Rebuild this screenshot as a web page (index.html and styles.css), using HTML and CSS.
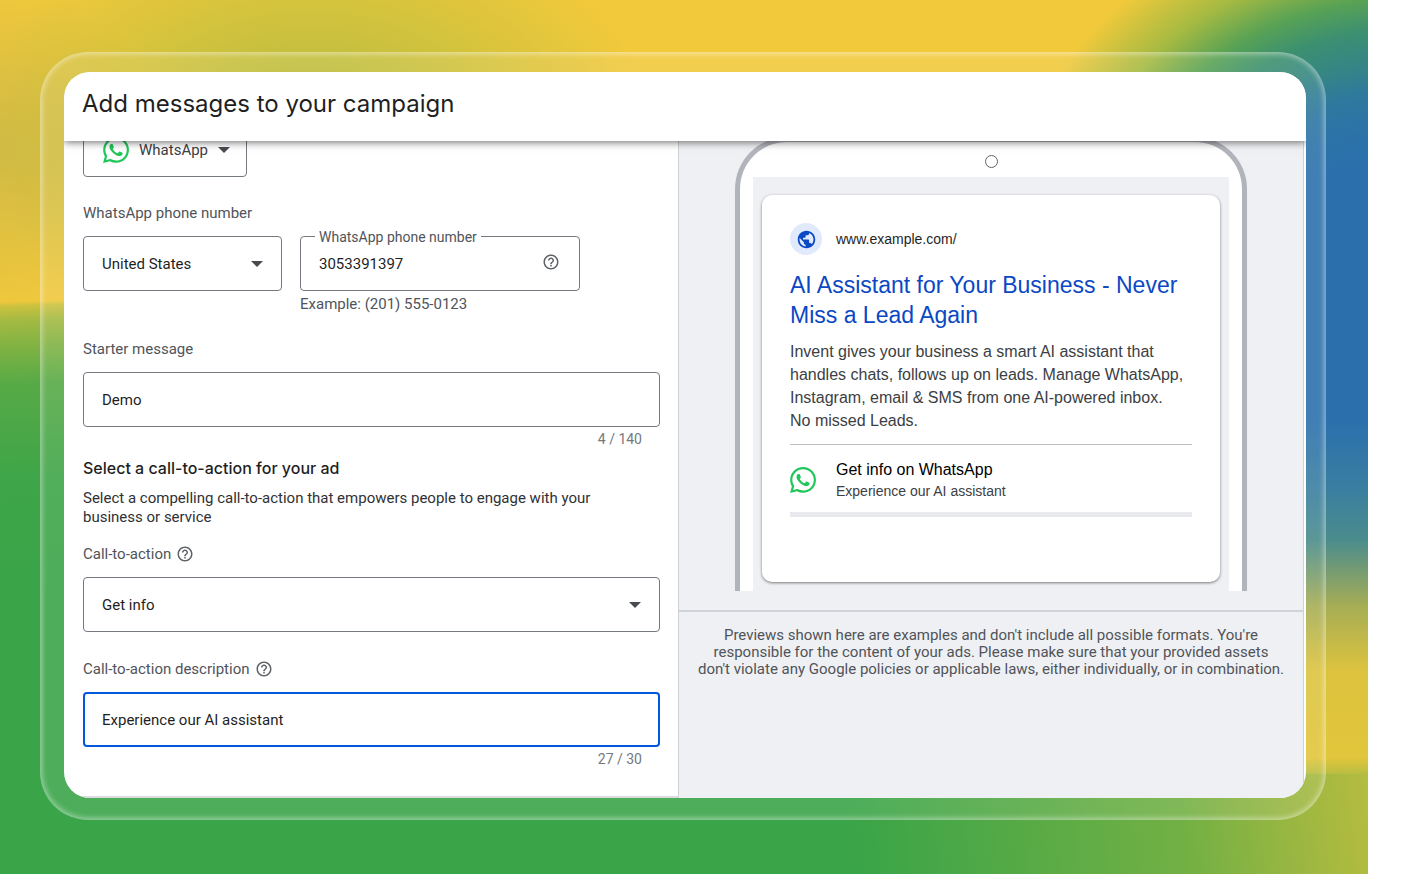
FILE: index.html
```
<!DOCTYPE html>
<html lang="en">
<head>
    <meta charset="UTF-8">
    <meta name="viewport" content="width=device-width, initial-scale=1.0">
    <title>Add messages to your campaign</title>
    <link rel="stylesheet" href="styles.css">
</head>
<body>
    <svg class="sprite" aria-hidden="true">
        <symbol id="icon-whatsapp" viewBox="0 0 24 24">
            <path fill="currentColor" d="M17.472 14.382c-.297-.149-1.758-.867-2.03-.967-.273-.099-.471-.148-.67.15-.197.297-.767.966-.94 1.164-.173.199-.347.223-.644.075-.297-.15-1.255-.463-2.39-1.475-.883-.788-1.48-1.761-1.653-2.059-.173-.297-.018-.458.13-.606.134-.133.298-.347.446-.52.149-.174.198-.298.298-.497.099-.198.05-.371-.025-.52-.075-.149-.669-1.612-.916-2.207-.242-.579-.487-.5-.669-.51-.173-.008-.371-.01-.57-.01-.198 0-.52.074-.792.372-.272.297-1.04 1.016-1.04 2.479 0 1.462 1.065 2.875 1.213 3.074.149.198 2.096 3.2 5.077 4.487.709.306 1.262.489 1.694.625.712.227 1.36.195 1.871.118.571-.085 1.758-.719 2.006-1.413.248-.694.248-1.289.173-1.413-.074-.124-.272-.198-.57-.347m-5.421 7.403h-.004a9.87 9.87 0 01-5.031-1.378l-.361-.214-3.741.982.998-3.648-.235-.374a9.86 9.86 0 01-1.51-5.26c.001-5.45 4.436-9.884 9.888-9.884 2.64 0 5.122 1.03 6.988 2.898a9.825 9.825 0 012.893 6.994c-.003 5.45-4.437 9.884-9.885 9.884m8.413-18.297A11.815 11.815 0 0012.05 0C5.495 0 .16 5.335.157 11.892c0 2.096.547 4.142 1.588 5.945L.057 24l6.305-1.654a11.882 11.882 0 005.683 1.448h.005c6.554 0 11.89-5.335 11.893-11.893a11.821 11.821 0 00-3.48-8.413z"/>
        </symbol>
        <symbol id="icon-help" viewBox="0 0 24 24">
            <path fill="currentColor" d="M11 18h2v-2h-2v2zm1-16C6.48 2 2 6.48 2 12s4.48 10 10 10 10-4.48 10-10S17.52 2 12 2zm0 18c-4.41 0-8-3.59-8-8s3.59-8 8-8 8 3.59 8 8-3.59 8-8 8zm0-14c-2.21 0-4 1.79-4 4h2c0-1.1.9-2 2-2s2 .9 2 2c0 2-3 1.75-3 5h2c0-2.25 3-2.5 3-5 0-2.21-1.79-4-4-4z"/>
        </symbol>
        <symbol id="icon-globe" viewBox="0 0 24 24">
            <path fill="currentColor" d="M12 2C6.48 2 2 6.48 2 12s4.48 10 10 10 10-4.48 10-10S17.52 2 12 2zm-1 17.93c-3.95-.49-7-3.85-7-7.93 0-.62.08-1.21.21-1.79L9 15v1c0 1.1.9 2 2 2v1.93zm6.9-2.54c-.26-.81-1-1.39-1.9-1.39h-1v-3c0-.55-.45-1-1-1H8v-2h2c.55 0 1-.45 1-1V7h2c1.1 0 2-.9 2-2v-.41c2.93 1.19 5 4.06 5 7.41 0 2.08-.8 3.97-2.1 5.39z"/>
        </symbol>
    </svg>

    <main class="backdrop">
        <div class="frame">
            <div class="window">
                <header class="window-header">
                    <h1>Add messages to your campaign</h1>
                </header>

                <div class="panes">
                    <form class="form-pane">
                        <button type="button" class="provider">
                            <svg class="whatsapp-icon"><use href="#icon-whatsapp"/></svg>
                            <span>WhatsApp</span>
                            <span class="caret"></span>
                        </button>

                        <label class="field-label" for="country">WhatsApp phone number</label>
                        <div class="phone-row">
                            <select id="country" class="control">
                                <option>United States</option>
                            </select>
                            <div class="phone-field">
                                <div class="outlined">
                                    <label class="float-label" for="phone">WhatsApp phone number</label>
                                    <input id="phone" class="control" type="tel" value="3053391397">
                                    <svg class="help-icon"><use href="#icon-help"/></svg>
                                </div>
                                <p class="hint">Example: (201) 555-0123</p>
                            </div>
                        </div>

                        <label class="field-label" for="starter">Starter message</label>
                        <input id="starter" class="control" type="text" value="Demo">
                        <p class="counter">4 / 140</p>

                        <h2>Select a call-to-action for your ad</h2>
                        <p class="description">Select a compelling call-to-action that empowers people to engage with your business or service</p>

                        <label class="field-label" for="cta">Call-to-action <svg class="help-icon"><use href="#icon-help"/></svg></label>
                        <select id="cta" class="control">
                            <option>Get info</option>
                        </select>

                        <label class="field-label" for="cta-description">Call-to-action description <svg class="help-icon"><use href="#icon-help"/></svg></label>
                        <input id="cta-description" class="control active" type="text" value="Experience our AI assistant">
                        <p class="counter">27 / 30</p>
                    </form>

                    <aside class="preview-pane">
                        <div class="preview-stage">
                            <div class="device">
                                <div class="camera"></div>
                                <div class="screen">
                                    <article class="ad">
                                        <div class="ad-site">
                                            <span class="site-icon"><svg><use href="#icon-globe"/></svg></span>
                                            <span>www.example.com/</span>
                                        </div>
                                        <h3>AI Assistant for Your Business - Never Miss a Lead Again</h3>
                                        <p class="ad-text">Invent gives your business a smart AI assistant that handles chats, follows up on leads. Manage WhatsApp, Instagram, email &amp; SMS from one AI-powered inbox. No missed Leads.</p>
                                        <div class="ad-action">
                                            <svg class="whatsapp-icon"><use href="#icon-whatsapp"/></svg>
                                            <div>
                                                <p class="action-title">Get info on WhatsApp</p>
                                                <p class="action-text">Experience our AI assistant</p>
                                            </div>
                                        </div>
                                    </article>
                                </div>
                            </div>
                        </div>
                        <p class="disclaimer">Previews shown here are examples and don't include all possible formats. You're responsible for the content of your ads. Please make sure that your provided assets don't violate any Google policies or applicable laws, either individually, or in combination.</p>
                    </aside>
                </div>
            </div>
        </div>
    </main>
</body>
</html>
```
FILE: styles.css
```
* {
    margin: 0;
    padding: 0;
    box-sizing: border-box;
}

body {
    font-family: Roboto, Arial, sans-serif;
    font-size: 15px;
    line-height: 20px;
    color: #1f1f1f;
    background-color: #ffffff;
}

.sprite {
    display: none;
}

/* Edge strips first, then the soft blobs, then the yellow base */
.backdrop {
    min-height: 100vh;
    margin-right: 40px;
    padding: 52px 42px 54px 40px;
    background:
        linear-gradient(83deg, #39a448 62%, #72b044 86%, #a8b940 97%, #b5bc42 100%) bottom / 100% 100px no-repeat,
        linear-gradient(178deg, transparent 302px, #cdc23f 306px, #a5ba42 320px, #82b343 345px, #56aa46 385px, #3ea548 480px, #39a448 600px) left / 100px 100% no-repeat,
        linear-gradient(to bottom, transparent 75px, #2b70ad 180px, #2b70ad 420px, #3a7fa0 490px, #4a8c8c 540px, #a5ad55 605px, #dcc33f 670px, #e2c63b 758px, #b8bd42 774px) right / 64px 100% no-repeat,
        radial-gradient(ellipse 340px 220px at 310px 130px, rgba(170, 186, 64, 0.95), rgba(170, 186, 64, 0)),
        radial-gradient(ellipse 160px 170px at 0 150px, rgba(208, 184, 70, 0.9), rgba(208, 184, 70, 0)),
        radial-gradient(ellipse 370px 270px at 103% 190px, #2b70ad 10%, #2f7c98 38%, #3c9070 60%, #58a255 71%, #a5ba42 85%, rgba(241, 201, 59, 0) 104%),
        #f1c93b;
}

.frame {
    padding: 19px 19px 21px 23px;
    border: 1px solid rgba(255, 255, 255, 0.3);
    border-radius: 48px;
    background-color: rgba(255, 255, 255, 0.1);
    box-shadow: inset 0 0 6px rgba(255, 255, 255, 0.6);
}

.window {
    overflow: hidden;
    border-radius: 26px;
    background-color: #ffffff;
}

.window-header {
    position: relative;
    z-index: 1;
    padding: 16px 18px 21px;
    background-color: #ffffff;
    box-shadow: 0 1px 8px rgba(0, 0, 0, 0.6);
}

h1 {
    font-family: Inter, "Open Sans", sans-serif;
    font-size: 24px;
    font-weight: 400;
    line-height: 32px;
}

.panes {
    display: grid;
    grid-template-columns: 614fr 628fr;
    overflow: hidden;
}

/* Form */

.form-pane {
    display: flex;
    flex-direction: column;
    margin-top: -18px;
    padding: 0 18px 27px 19px;
    border-bottom: 2px solid #dadce0;
}

.provider {
    display: flex;
    align-items: center;
    align-self: flex-start;
    gap: 10px;
    height: 54px;
    margin-bottom: 26px;
    padding: 0 16px 0 19px;
    border: 1px solid #747980;
    border-radius: 4px;
    background-color: #ffffff;
    color: #3c4043;
    font: inherit;
}

.whatsapp-icon {
    flex: none;
    width: 26px;
    height: 26px;
    color: #1fc659;
}

.caret {
    border: 6px solid transparent;
    border-top-color: #474b50;
    border-bottom: 0;
}

.field-label {
    display: flex;
    align-items: center;
    gap: 5px;
    margin-bottom: 13px;
    color: #50545a;
}

.help-icon {
    flex: none;
    width: 18px;
    height: 18px;
    color: #5f6368;
}

.control {
    width: 100%;
    height: 55px;
    padding: 0 18px;
    border: 1px solid #747980;
    border-radius: 4px;
    background-color: #ffffff;
    color: #1f1f1f;
    font: inherit;
    outline: none;
}

.control.active {
    padding: 0 17px;
    border: 2px solid #0058dd;
}

select.control {
    appearance: none;
    background-image: url("data:image/svg+xml,%3Csvg xmlns='http://www.w3.org/2000/svg' width='12' height='6'%3E%3Cpath d='M0 0h12L6 6z' fill='%23474b50'/%3E%3C/svg%3E");
    background-repeat: no-repeat;
    background-position: right 18px center;
}

.phone-row {
    display: flex;
    align-items: flex-start;
    gap: 18px;
    margin-bottom: 25px;
}

.phone-row select {
    flex: 0 0 199px;
}

.phone-field {
    flex: 0 0 280px;
}

.outlined {
    position: relative;
}

.float-label {
    position: absolute;
    top: -9px;
    left: 15px;
    padding: 0 4px;
    background-color: #ffffff;
    color: #50545a;
    font-size: 14px;
}

.outlined .help-icon {
    position: absolute;
    top: 17px;
    right: 20px;
}

.hint {
    margin-top: 3px;
    color: #50545a;
}

.counter {
    margin: 2px 18px 0;
    color: #747980;
    font-size: 14px;
    text-align: right;
}

h2 {
    margin-top: 9px;
    font-family: Inter, "Open Sans", sans-serif;
    font-size: 16px;
    font-weight: 500;
    line-height: 20px;
}

.description {
    max-width: 520px;
    margin: 11px 0 17px;
    color: #303134;
    line-height: 19px;
}

select + .field-label {
    margin-top: 27px;
}

/* Ad preview */

.preview-pane {
    margin-right: 2px;
    border: solid #cfd1d6;
    border-width: 0 1px;
    background-color: #eff0f3;
}

.preview-stage {
    padding: 0 56px 19px;
    border-bottom: 2px solid #d0d3d9;
}

.device {
    display: flex;
    flex-direction: column;
    align-items: center;
    margin-top: -4px;
    padding: 13px 13px 0;
    border: 5px solid #b1b4ba;
    border-bottom: 0;
    border-radius: 52px 52px 0 0;
    background-color: #ffffff;
}

.camera {
    width: 13px;
    height: 13px;
    margin-bottom: 9px;
    border: 1px solid #5f6368;
    border-radius: 50%;
}

.screen {
    width: 100%;
    padding: 18px 9px 9px;
    background-color: #eff0f3;
}

.ad {
    padding: 28px 28px 65px;
    border-radius: 10px;
    background-color: #ffffff;
    box-shadow: 0 1px 3px rgba(0, 0, 0, 0.5);
    font-family: "Liberation Sans", Arial, sans-serif;
}

.ad-site {
    display: flex;
    align-items: center;
    gap: 14px;
    font-size: 14px;
}

.site-icon {
    display: grid;
    place-items: center;
    width: 32px;
    height: 32px;
    border-radius: 50%;
    background-color: #e1e9fd;
    color: #0b48c4;
}

.site-icon svg {
    width: 21px;
    height: 21px;
}

h3 {
    margin: 15px 0 10px;
    color: #0b48c4;
    font-size: 23px;
    font-weight: 400;
    line-height: 30px;
}

.ad-text {
    padding: 0 8px 12px 0;
    border-bottom: 1px solid #bdc1c6;
    color: #3c4043;
    font-size: 16px;
    line-height: 23px;
}

.ad-action {
    display: flex;
    align-items: center;
    gap: 20px;
    padding: 14px 0 11px;
    border-bottom: 5px solid #e8eaed;
}

.action-title {
    color: #000000;
    font-size: 16px;
    line-height: 22px;
}

.action-text {
    color: #3c4043;
    font-size: 14px;
}

.disclaimer {
    padding: 15px 18px;
    color: #50545a;
    line-height: 17px;
    text-align: center;
}
```
